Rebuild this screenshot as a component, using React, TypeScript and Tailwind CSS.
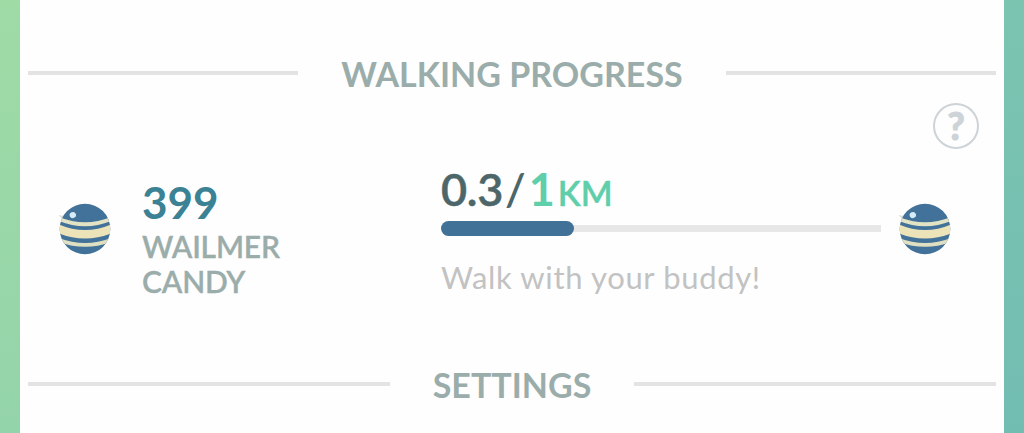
import type { ReactNode } from "react";

function Candy({ id }: { id: string }) {
  return (
    <svg viewBox="0 0 54 54" className="block h-[54px] w-[54px] shrink-0" aria-hidden="true">
      <defs>
        <clipPath id={id}>
          <circle cx="27" cy="27" r="25.3" />
        </clipPath>
      </defs>
      <path d="M0.5 13 L6 14 L4 17 Z" fill="#d9dedb" />
      <g clipPath={`url(#${id})`}>
        <rect width="54" height="54" fill="#427199" />
        <path d="M0 14.5 Q27 26 54 14.5 V18.5 Q27 30 0 18.5 Z" fill="#e2e2c4" />
        <path d="M0 22 Q27 34 54 22 V31 Q27 42 0 31 Z" fill="#ede3b8" />
        <path d="M0 35.5 Q27 46.5 54 35.5 V39.5 Q27 50 0 39.5 Z" fill="#dfdfc2" />
      </g>
      <ellipse cx="14.8" cy="13" rx="3.2" ry="3" fill="#d5ecf6" transform="rotate(-25 15 13)" />
    </svg>
  );
}

function SectionHeading({ children }: { children: ReactNode }) {
  return (
    <div className="flex h-[46px] items-center gap-[43px]">
      <div className="h-1 flex-1 bg-[#e3e3e3]" />
      <h2 className="pt-0.5 text-[34px] leading-[46px] font-bold whitespace-nowrap text-[#9badab]">
        {children}
      </h2>
      <div className="h-1 flex-1 bg-[#e3e3e3]" />
    </div>
  );
}

export default function App() {
  return (
    <div className="flex h-[433px] w-[1024px] overflow-hidden font-['Lato',sans-serif]">
      <div className="w-[19.5px] shrink-0 bg-linear-to-b from-[#9edba5] to-[#94d4aa]" />
      <main className="flex flex-1 flex-col bg-[#fefefe] pt-[50px] pr-2 pl-[8.5px]">
        <SectionHeading>WALKING PROGRESS</SectionHeading>

        <div className="flex h-[265px]">
          <div className="flex w-[413px] pt-[106px] pl-[30px]">
            <Candy id="candy-left" />
            <div className="-mt-[27px] ml-[30px]">
              <div className="text-[44px] leading-[54px] font-bold text-[#3b8295]">399</div>
              <div className="text-[30px] leading-[35px] font-semibold tracking-[-0.2px] text-[#9badab] [-webkit-text-stroke:0.3px_#9badab]">
                WAILMER
                <br />
                CANDY
              </div>
            </div>
          </div>

          <div className="w-[440px] pt-[66px]">
            <div className="flex h-[54px] items-baseline leading-[54px]">
              <span className="text-[45px] font-semibold tracking-[-0.3px] text-[#4d6669] [-webkit-text-stroke:0.5px_#4d6669]">
                0.3
              </span>
              <span className="ml-0.5 text-[45px] font-semibold text-[#4d6669]">/</span>
              <span className="ml-[3px] text-[45px] font-bold text-[#5fceaa]">1</span>
              <span className="ml-[3px] text-[34px] font-semibold text-[#5fceaa] [-webkit-text-stroke:0.4px_#5fceaa]">
                KM
              </span>
            </div>
            <div className="mt-[5px] flex h-[15px] items-center">
              <div className="z-10 h-[15px] w-[133px] rounded-full bg-[#427198]" />
              <div className="-ml-2 h-[7px] flex-1 bg-[#e7e7e7]" />
            </div>
            <p className="mt-[21px] text-[31px] leading-[40px] tracking-[0.65px] text-[#c2c2c2]">
              Walk with your buddy!
            </p>
          </div>

          <div className="ml-[16.5px] flex flex-1 flex-col">
            <div className="mt-[7px] mr-[17px] flex h-[46px] w-[46px] items-center justify-center self-end rounded-full border-[2.5px] border-[#cdd3d6] pb-0.5 text-[38px] leading-[40px] font-black text-[#cdd3d6] [-webkit-text-stroke:0.8px_#cdd3d6]">
              ?
            </div>
            <div className="mt-[53px]">
              <Candy id="candy-right" />
            </div>
          </div>
        </div>

        <SectionHeading>SETTINGS</SectionHeading>
      </main>
      <div className="w-5 shrink-0 bg-linear-to-b from-[#7bc4b0] to-[#72bdb2]" />
    </div>
  );
}
